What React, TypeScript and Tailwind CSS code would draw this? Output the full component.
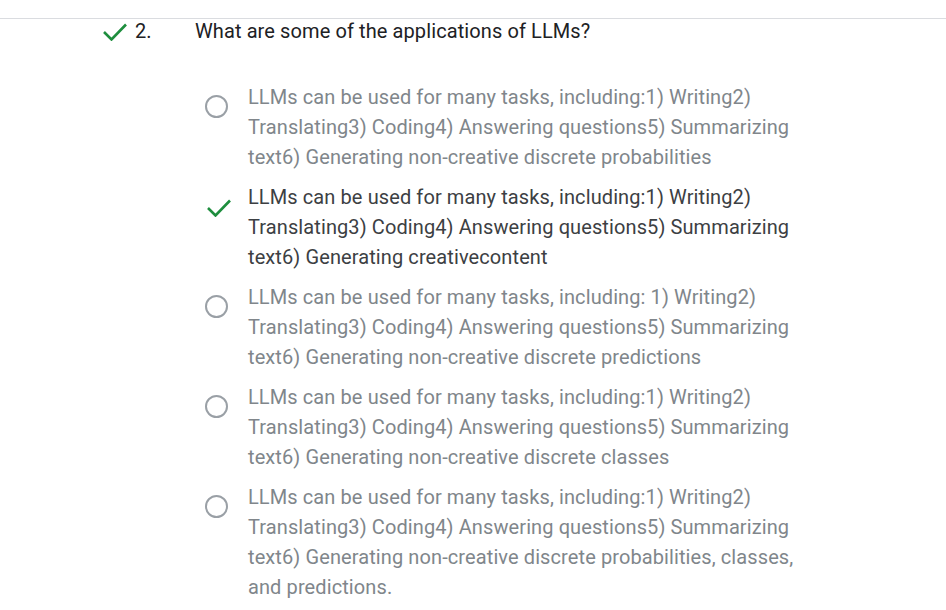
import React from "react";

const OPTIONS: { text: string; selected: boolean }[] = [
  {
    text: "LLMs can be used for many tasks, including:1) Writing2) Translating3) Coding4) Answering questions5) Summarizing text6) Generating non-creative discrete probabilities",
    selected: false,
  },
  {
    text: "LLMs can be used for many tasks, including:1) Writing2) Translating3) Coding4) Answering questions5) Summarizing text6) Generating creativecontent",
    selected: true,
  },
  {
    text: "LLMs can be used for many tasks, including: 1) Writing2) Translating3) Coding4) Answering questions5) Summarizing text6) Generating non-creative discrete predictions",
    selected: false,
  },
  {
    text: "LLMs can be used for many tasks, including:1) Writing2) Translating3) Coding4) Answering questions5) Summarizing text6) Generating non-creative discrete classes",
    selected: false,
  },
  {
    text: "LLMs can be used for many tasks, including:1) Writing2) Translating3) Coding4) Answering questions5) Summarizing text6) Generating non-creative discrete probabilities, classes, and predictions.",
    selected: false,
  },
];

function Check({ className }: { className?: string }) {
  return (
    <svg className={className} width="24" height="18" viewBox="0 0 24 18" fill="none">
      <polyline points="1,9 8.5,16.5 23,1.5" stroke="#1e8e3e" strokeWidth="2.6" strokeLinecap="butt" strokeLinejoin="miter" />
    </svg>
  );
}

export default function App() {
  return (
    <div className="min-h-[610px] w-[946px] bg-white pt-[18px] font-['Roboto',sans-serif] tracking-[0.1px]">
      <div className="border-t border-[#dadce0]">
        <div className="flex h-[23px] items-center text-[20px] leading-6 text-[#202124]">
          <div className="flex w-[135px] justify-end pr-[8px] pt-[3px]">
            <Check />
          </div>
          <span className="w-[60px]">2.</span>
          <span>What are some of the applications of LLMs?</span>
        </div>

        <ul className="mt-[40px] flex flex-col gap-[10px] pl-[205px]">
          {OPTIONS.map((o, i) => (
            <li key={i} className="flex">
              <div className="w-[43px] shrink-0">
                {o.selected ? (
                  <Check className="mt-[17px] ml-[2px]" />
                ) : (
                  <div className="mt-[13px] h-[23px] w-[23px] rounded-full border-2 border-[#9aa0a6]" />
                )}
              </div>
              <p
                className={`w-[560px] text-[20px] leading-[30px] ${
                  o.selected ? "text-[#3c4043]" : "text-[#80868b]"
                }`}
              >
                {o.text}
              </p>
            </li>
          ))}
        </ul>
      </div>
    </div>
  );
}
